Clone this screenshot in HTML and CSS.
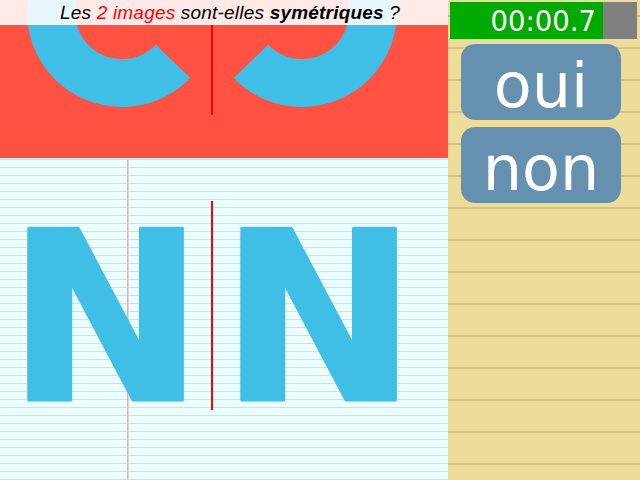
FILE: index.html
```html
<!DOCTYPE html>
<html lang="fr">
<head>
<meta charset="utf-8">
<link rel="stylesheet" href="styles.css">
</head>
<body>
<div class="app">
  <div class="board">
    <div class="pic pic-top">
      <svg class="art" width="448" height="158" viewBox="0 0 448 158">
        <circle cx="122" cy="12" r="71" fill="none" stroke="#40bfe6" stroke-width="48" stroke-dasharray="337 109" stroke-dashoffset="-54.5"/>
        <g transform="translate(424 0) scale(-1 1)">
          <circle cx="122" cy="12" r="71" fill="none" stroke="#40bfe6" stroke-width="48" stroke-dasharray="337 109" stroke-dashoffset="-54.5"/>
        </g>
        <rect x="211" y="0" width="2" height="115" fill="#ff0000"/>
      </svg>
      <div class="question">Les <span class="hl">2 images</span> sont-elles <b>symétriques</b> ?</div>
    </div>
    <div class="sep"></div>
    <div class="pic pic-bottom">
      <svg class="art" width="448" height="320" viewBox="0 0 448 320">
        <rect x="127" y="0" width="1.5" height="320" fill="#f0a8a8"/>
        <text class="glyph" x="105.5" y="240">N</text>
        <text class="glyph" x="318.5" y="240">N</text>
        <rect x="211" y="41" width="2" height="209" fill="#ff0000"/>
      </svg>
    </div>
  </div>
  <div class="side">
    <div class="timer">
      <div class="time">00:00.7</div>
      <div class="time-rest"></div>
    </div>
    <button class="answer">oui</button>
    <button class="answer">non</button>
  </div>
</div>
</body>
</html>
```

FILE: styles.css
```css
html, body {
  margin: 0;
  padding: 0;
}
body {
  width: 640px;
  height: 480px;
  overflow: hidden;
  font-family: "DejaVu Sans", sans-serif;
}
.app {
  display: flex;
  width: 640px;
  height: 480px;
}
.board {
  width: 448px;
  display: flex;
  flex-direction: column;
}
.pic {
  position: relative;
  overflow: hidden;
}
.art {
  display: block;
}
.pic-top {
  height: 158px;
  background: #ff5243;
}
.question {
  position: absolute;
  left: 0;
  top: 0;
  width: 448px;
  height: 25px;
  background: rgba(255, 255, 255, 0.88);
  text-align: center;
  font-family: "Liberation Sans", sans-serif;
  font-style: italic;
  font-size: 19px;
  letter-spacing: 0.2px;
  line-height: 25px;
  color: #000;
  padding-left: 12px;
  box-sizing: border-box;
}
.question .hl {
  color: #ff0000;
}
.question b {
  font-weight: bold;
}
.sep {
  height: 2px;
  background: #dde5e5;
}
.pic-bottom {
  flex: 1;
  background-color: #ecffff;
  background-image: repeating-linear-gradient(to bottom, transparent 0, transparent 7px, #cde2e2 7px, #cde2e2 8px);
}
.glyph {
  font-family: "DejaVu Sans", sans-serif;
  font-weight: bold;
  font-size: 235px;
  fill: #40bfe6;
  stroke: #40bfe6;
  stroke-width: 3;
  stroke-linejoin: round;
  text-anchor: middle;
}
.side {
  width: 192px;
  background-color: #eedc9a;
  background-image: repeating-linear-gradient(to bottom, transparent 0, transparent 15px, #d7c288 15px, #d7c288 17px, transparent 17px, transparent 32px);
  display: flex;
  flex-direction: column;
  padding: 2px 3px 0 2px;
  box-sizing: border-box;
}
.timer {
  display: flex;
  height: 37px;
}
.time {
  width: 153px;
  background: #00aa00;
  color: #fff;
  font-family: "DejaVu Sans", sans-serif;
  font-size: 27.5px;
  line-height: 38px;
  text-align: right;
  padding-right: 7px;
  box-sizing: border-box;
}
.time-rest {
  flex: 1;
  background: #808080;
}
.answer {
  margin: 5px 0 0 11px;
  width: 160px;
  height: 76px;
  border: none;
  border-radius: 14px;
  background: #6690b0;
  color: #fff;
  font-family: "DejaVu Sans", sans-serif;
  font-size: 62px;
  line-height: 76px;
  padding: 4px 0 0 0;
  text-align: center;
}
.answer + .answer {
  margin-top: 7px;
}
```
